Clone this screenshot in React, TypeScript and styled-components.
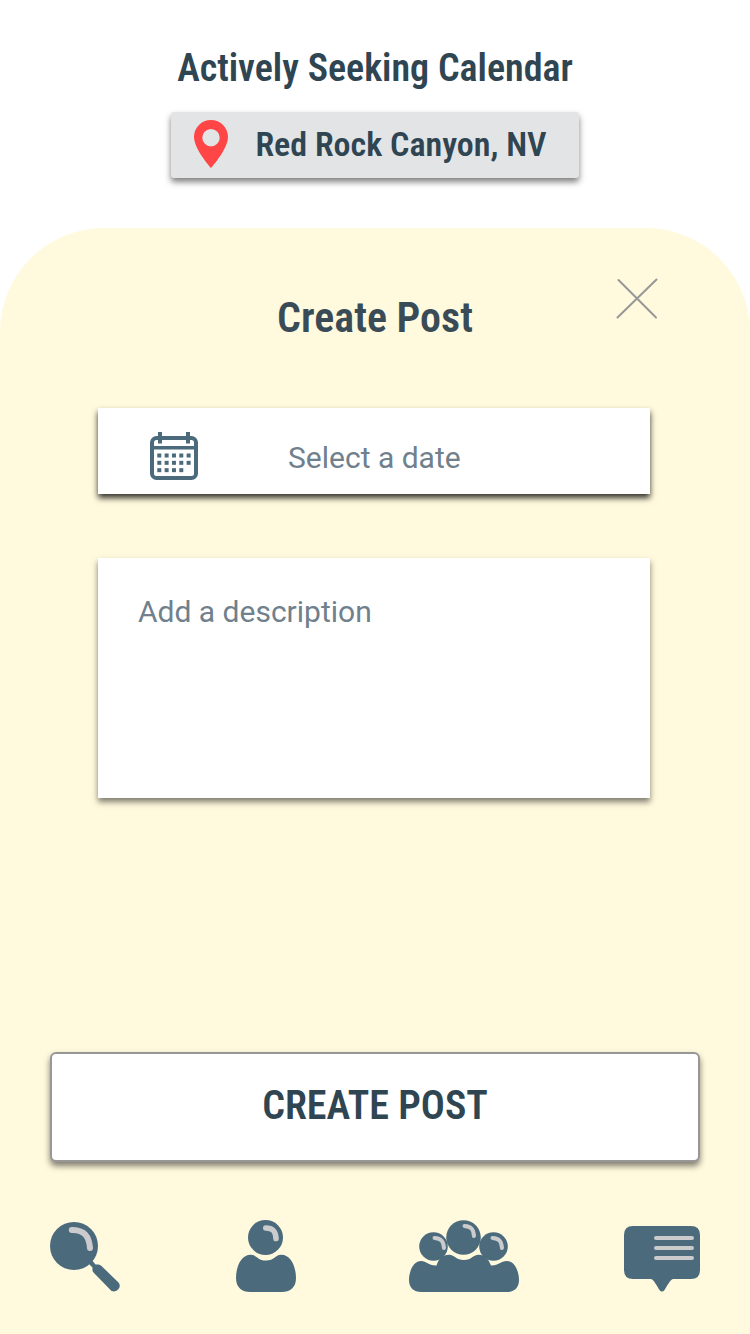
import React from "react";
import styled, { createGlobalStyle } from "styled-components";

const ink = "#2f4552";
const slate = "#4b6b7d";
const shine = "#cbcbcd";
const condensed = '"Roboto Condensed", "Liberation Sans", sans-serif';

const GlobalStyle = createGlobalStyle`
  *, *::before, *::after { box-sizing: border-box; }
  body {
    margin: 0;
    background: #ffffff;
    color: ${ink};
    font-family: Roboto, "Liberation Sans", sans-serif;
  }
  button, input, textarea { font: inherit; color: inherit; }
  svg { display: block; }
`;

const Page = styled.div`
  display: flex;
  flex-direction: column;
  min-height: 100vh;
`;

const Header = styled.header`
  display: flex;
  flex-direction: column;
  align-items: center;
  padding: 44px 24px 50px;
`;

const Title = styled.h1`
  margin: 0 0 20px;
  font: 600 38px/48px ${condensed};
`;

const LocationButton = styled.button`
  display: flex;
  align-items: center;
  gap: 27px;
  min-height: 66px;
  padding: 0 32px 2px 23px;
  border: 0;
  border-radius: 3px;
  background: #e3e4e6;
  box-shadow: 0 4px 6px rgba(0, 0, 0, 0.5);
  font: 600 34px/48px ${condensed};
  cursor: pointer;
`;

const Panel = styled.main`
  display: flex;
  flex: 1;
  flex-direction: column;
  border-radius: 104px 104px 0 0;
  background: #fff9dd;
`;

const PostForm = styled.form`
  display: flex;
  flex: 1;
  flex-direction: column;
`;

const PanelHeader = styled.div`
  display: grid;
  grid-template-columns: 1fr auto 1fr;
  align-items: start;
  padding: 50px 92px 60px;
`;

const PanelTitle = styled.h2`
  grid-column: 2;
  margin: 12px 0 0;
  color: #384b57;
  font: 600 42px/56px ${condensed};
`;

const CloseButton = styled.button`
  justify-self: end;
  padding: 0;
  border: 0;
  background: none;
  cursor: pointer;
`;

const Fields = styled.div`
  display: flex;
  flex-direction: column;
  gap: 64px;
  padding: 2px 100px 0 98px;
`;

const DateField = styled.label`
  display: flex;
  align-items: center;
  gap: 90px;
  height: 86px;
  padding: 10px 52px 0;
  background: #ffffff;
  box-shadow: 0 4px 6px rgba(0, 0, 0, 0.8);
`;

const DateInput = styled.input`
  flex: 1;
  min-width: 0;
  padding: 4px 0 0;
  border: 0;
  outline: 0;
  background: none;
  font-size: 30px;
  line-height: 36px;
  &::placeholder { color: #70808c; opacity: 1; }
`;

const Description = styled.textarea`
  display: block;
  width: 100%;
  height: 240px;
  padding: 36px 40px;
  border: 0;
  outline: 0;
  resize: none;
  background: #ffffff;
  box-shadow: 0 4px 6px rgba(0, 0, 0, 0.5);
  font-size: 30px;
  line-height: 36px;
  &::placeholder { color: #70808c; opacity: 1; }
`;

const SubmitButton = styled.button`
  min-height: 110px;
  margin: auto 50px 58px;
  padding: 0 24px 2px;
  border: 2px solid #979797;
  border-radius: 6px;
  background: #ffffff;
  box-shadow: 0 4px 6px rgba(0, 0, 0, 0.5);
  font: 600 40px/56px ${condensed};
  cursor: pointer;
`;

const NavBar = styled.nav`
  display: grid;
  grid-template-columns: 186fr 173fr 215fr 76fr;
  align-items: end;
  padding: 0 50px 42px;
`;

const NavLink = styled.a`
  justify-self: start;
`;

function PinIcon() {
  return (
    <svg width="34" height="48" viewBox="0 0 34 48" aria-hidden="true">
      <path
        fill="#ff4545"
        fillRule="evenodd"
        d="M17 0C7.600 0 0 7.500 0 16.800C0 29.500 17 48 17 48S34 29.500 34 16.800C34 7.500 26.400 0 17 0ZM17 9A8.700 8.700 0 1 1 17 26.400A8.700 8.700 0 0 1 17 9Z"
      />
    </svg>
  );
}

function CloseIcon() {
  return (
    <svg width="42" height="42" viewBox="0 0 42 42" aria-hidden="true">
      <path d="M2.500 2L40 39.500M40.500 1.500L1.500 39.500" fill="none" stroke="#979797" strokeWidth="2" strokeLinecap="round" />
    </svg>
  );
}

const dots = [0, 1, 2].flatMap((row) =>
  Array.from({ length: row === 2 ? 4 : 5 }, (_, col) => ({ x: 7.3 + col * 7.33, y: 21.5 + row * 7.33 }))
);

function CalendarIcon() {
  return (
    <svg width="48" height="48" viewBox="0 0 48 48" aria-hidden="true">
      <rect x="2" y="6" width="44" height="40" rx="4.500" fill="none" stroke={slate} strokeWidth="4" />
      <path d="M2 15.700H46" stroke={slate} strokeWidth="3.500" />
      <path d="M10 0V11.500M38 0V11.500" stroke={slate} strokeWidth="4" />
      {dots.map((dot) => (
        <rect key={`${dot.x}-${dot.y}`} x={dot.x} y={dot.y} width="4" height="4" fill={slate} />
      ))}
    </svg>
  );
}

function SearchIcon() {
  return (
    <svg width="70" height="70" viewBox="0 0 70 70" aria-hidden="true">
      <g fill={slate}>
        <circle cx="24" cy="24" r="24" />
        <path d="M38 41L41.500 37.500L45.500 42.500H48.500Q50 42.500 51.500 44L68.500 60.500Q71 63.500 68.500 67T61.500 69L43.500 50.500Q42 49 42.500 45.500Z" />
      </g>
      <path d="M21.800 8H23C34.500 8.500 39 14 40 26" fill="none" stroke={shine} strokeWidth="6" strokeLinecap="round" />
    </svg>
  );
}

function PersonIcon() {
  return (
    <svg width="60" height="72" viewBox="0 0 60 72" aria-hidden="true">
      <g fill={slate}>
        <circle cx="29.500" cy="17.500" r="17.500" />
        <path d="M15 34.700C21 35 21.500 40.500 30 40.500S39 35 45 34.700C55 34.500 60 47 60 58C60 68 53.500 72 46 72H14C6.500 72 0 68 0 58C0 47 5 34.500 15 34.700Z" />
      </g>
      <path d="M29.800 8C37 8 39.500 11 40 18.500" fill="none" stroke={shine} strokeWidth="5.600" strokeLinecap="round" />
    </svg>
  );
}

function GroupIcon() {
  return (
    <svg width="110" height="72" viewBox="0 0 110 72" aria-hidden="true">
      <g fill={slate}>
        <circle cx="24.500" cy="26.500" r="14.300" />
        <circle cx="54.500" cy="17.500" r="17.300" />
        <circle cx="84.500" cy="26.500" r="14.300" />
        <path d="M12 41C18 41 19 45.800 27.500 45.500C30 38 33 35 40 34.700C46 35 47 40 55 40S63 35 70 34.700C76 35 79 38 82 45.500C90 45.800 91 41 98 41C106 41 110 52 110 60C110 68 105 72 98 72H12C5 72 0 68 0 60C0 52 4 41 12 41Z" />
      </g>
      <g fill="none" stroke={shine} strokeWidth="4" strokeLinecap="round">
        <path d="M55.500 6C62.500 6.500 64.500 9.500 65 16" />
        <path d="M25.500 18C32.500 18.500 34.500 21.500 35 28" />
        <path d="M83.500 18C90.500 18.500 92.500 21.500 93 28" />
      </g>
    </svg>
  );
}

function ChatIcon() {
  return (
    <svg width="76" height="66" viewBox="0 0 76 66" aria-hidden="true">
      <path
        fill={slate}
        d="M9 0H67Q76 0 76 9V44Q76 53 67 53H49C46 54 43 60 40.500 64Q38 67 35.500 64C33 60 30 54 27 53H9Q0 53 0 44V9Q0 0 9 0Z"
      />
      <path d="M32 12H68M32 22H68M32 32H68" stroke={shine} strokeWidth="4" strokeLinecap="round" />
    </svg>
  );
}

const destinations = [
  { label: "Search", href: "#search", Icon: SearchIcon },
  { label: "Profile", href: "#profile", Icon: PersonIcon },
  { label: "Groups", href: "#groups", Icon: GroupIcon },
  { label: "Messages", href: "#messages", Icon: ChatIcon },
];

export default function App() {
  return (
    <Page>
      <GlobalStyle />
      <Header>
        <Title>Actively Seeking Calendar</Title>
        <LocationButton type="button">
          <PinIcon />
          Red Rock Canyon, NV
        </LocationButton>
      </Header>
      <Panel>
        <PostForm onSubmit={(event) => event.preventDefault()}>
          <PanelHeader>
            <PanelTitle>Create Post</PanelTitle>
            <CloseButton type="button" aria-label="Close">
              <CloseIcon />
            </CloseButton>
          </PanelHeader>
          <Fields>
            <DateField>
              <CalendarIcon />
              <DateInput type="text" name="date" aria-label="Date" placeholder="Select a date" />
            </DateField>
            <Description name="description" aria-label="Description" placeholder="Add a description" />
          </Fields>
          <SubmitButton type="submit">CREATE POST</SubmitButton>
        </PostForm>
        <NavBar aria-label="Main">
          {destinations.map(({ label, href, Icon }) => (
            <NavLink key={label} href={href} aria-label={label}>
              <Icon />
            </NavLink>
          ))}
        </NavBar>
      </Panel>
    </Page>
  );
}
